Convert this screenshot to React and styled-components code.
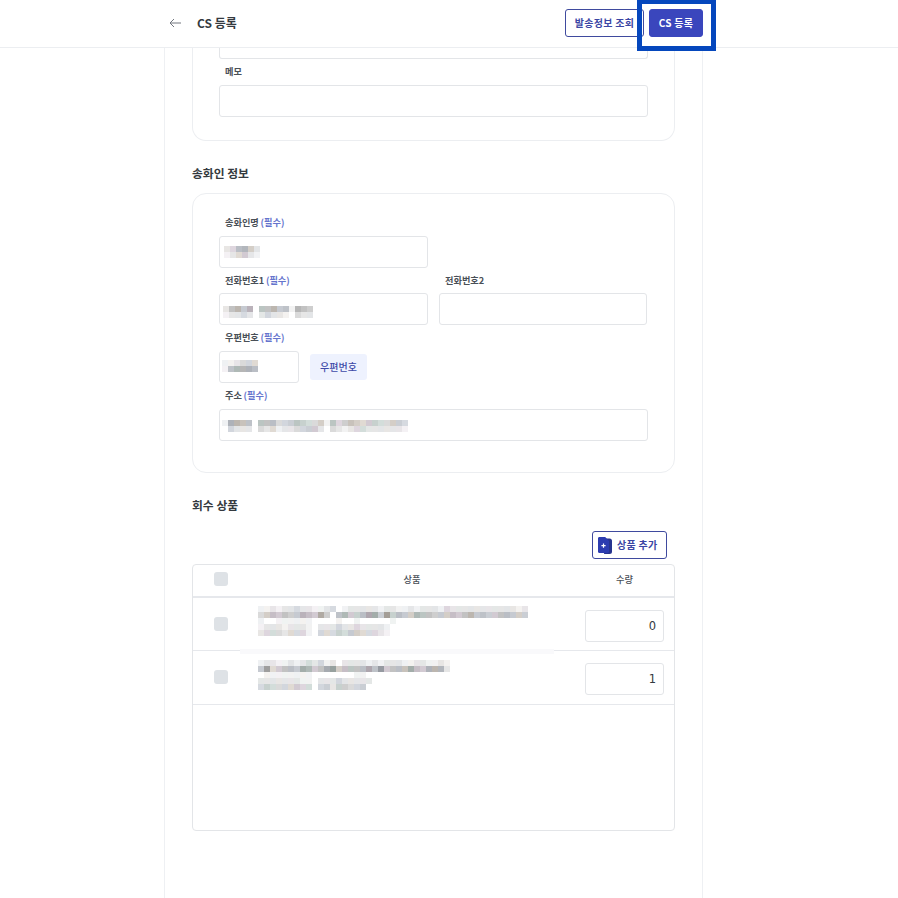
import React from "react";
import styled, { createGlobalStyle } from "styled-components";

const Global = createGlobalStyle`
  html, body { margin: 0; padding: 0; background: #fff; }
  body {
    height: 898px;
    overflow: hidden;
    font-family: "Noto Sans CJK KR", "Noto Sans", sans-serif;
    color: #343a40;
  }
  * { box-sizing: border-box; }
`;

const Page = styled.div`
  position: relative;
  width: 898px;
  height: 898px;
  overflow: hidden;
  display: flex;
  flex-direction: column;
`;

const Header = styled.header`
  flex: none;
  height: 48px;
  border-bottom: 1px solid #eceef1;
  padding: 9px 195px 0 169px;
  display: flex;
  align-items: flex-start;
`;

const BackButton = styled.span`
  display: flex;
  width: 12px;
  height: 28px;
  align-items: center;
  margin-right: 16px;
`;

const PageTitle = styled.h1`
  margin: 0;
  flex: 1;
  font-size: 12px;
  line-height: 27px;
  font-weight: 700;
  color: #343a40;
`;

const HeaderButton = styled.button`
  height: 28px;
  padding: 0;
  margin-left: ${(p) => p.$gap || 0}px;
  width: ${(p) => p.$width}px;
  border-radius: 3px;
  font: 700 10px/26px "Noto Sans CJK KR", sans-serif;
  letter-spacing: 0.3px;
  border: 1px solid ${(p) => (p.$solid ? "#3a46bd" : "#3f4a9e")};
  background: ${(p) => (p.$solid ? "#3a46bd" : "#fff")};
  color: ${(p) => (p.$solid ? "#fff" : "#3b46a5")};
`;

const Highlight = styled.div`
  position: absolute;
  left: 637px;
  top: -1px;
  width: 79px;
  height: 52px;
  border: 5px solid #0547bd;
  pointer-events: none;
`;

const Column = styled.main`
  flex: 1;
  width: 539px;
  margin-left: 164px;
  padding: 0 27px;
  border-left: 1px solid #eef0f3;
  border-right: 1px solid #eef0f3;
`;

const Card = styled.section`
  border: 1px solid #eceef1;
  border-top: ${(p) => (p.$clipped ? "none" : "1px solid #eceef1")};
  border-radius: ${(p) => (p.$clipped ? "0 0 14px 14px" : "14px")};
  padding: ${(p) => (p.$clipped ? "0 26px 23px" : "16.3px 26px 31.7px")};
`;

const SectionTitle = styled.h2`
  margin: 0;
  padding: 22px 0 10px;
  font-size: 11.8px;
  line-height: 20px;
  font-weight: 700;
  color: #343a40;
`;

const Row = styled.div`
  display: flex;
  gap: 11px;
`;

const Field = styled.div`
  display: flex;
  flex-direction: column;
  width: ${(p) => p.$width || "100%"};
`;

const Label = styled.label`
  height: 25.67px;
  padding: 3px 0 0 6px;
  font-size: 9.2px;
  line-height: 18px;
  font-weight: 700;
  color: #495057;
  white-space: nowrap;
`;

const Required = styled.span`
  color: #6574cd;
  margin-left: -0.4px;
`;

const Input = styled.div`
  height: ${(p) => p.$height || 32}px;
  border: 1px solid #e3e5e8;
  border-top: ${(p) => (p.$clipped ? "none" : "1px solid #e3e5e8")};
  border-radius: ${(p) => (p.$clipped ? "0 0 3px 3px" : "3px")};
  padding-left: 3px;
  display: flex;
  align-items: center;
  background: #fff;
`;

const ZipRow = styled.div`
  display: flex;
  align-items: center;
  gap: 11px;
`;

const ZipButton = styled.button`
  width: 57px;
  height: 26px;
  padding: 0;
  border: none;
  border-radius: 3px;
  background: #eef2fe;
  color: #3f4aa8;
  font: 500 10px/26px "Noto Sans CJK KR", sans-serif;
`;

const AddBar = styled.div`
  display: flex;
  justify-content: flex-end;
  padding: 6px 8px 5px 0;
`;

const AddButton = styled.button`
  width: 75px;
  height: 28px;
  padding: 0 0 0 5px;
  border: 1px solid #3f4a9e;
  border-radius: 3px;
  background: #fff;
  color: #3b46a5;
  display: flex;
  align-items: center;
  gap: 5px;
  font: 700 10px/26px "Noto Sans CJK KR", sans-serif;
  letter-spacing: 0.3px;
  white-space: nowrap;
`;

const Table = styled.div`
  height: 267px;
  border: 1px solid #e3e5e8;
  border-radius: 4px;
  overflow: hidden;
`;

const TableRow = styled.div`
  position: relative;
  display: grid;
  grid-template-columns: 65px 308px 1fr;
  align-items: center;
  height: ${(p) => p.$height}px;
  padding-bottom: ${(p) => p.$lift || 0}px;
  border-bottom: ${(p) => p.$rule || 1}px solid #e6e8ec;
`;

const Smudge = styled.div`
  position: absolute;
  left: 47px;
  right: 120px;
  bottom: -4px;
  height: 5px;
  background: #f9f9fb;
`;

const Check = styled.span`
  display: block;
  width: 14px;
  height: 14px;
  margin: -1px 0 0 21px;
  border-radius: 3px;
  background: #dee2e6;
`;

const HeadCell = styled.div`
  justify-self: ${(p) => (p.$qty ? "end" : "center")};
  width: ${(p) => (p.$qty ? "79px" : "auto")};
  margin-right: ${(p) => (p.$qty ? "10px" : 0)};
  text-align: center;
  font-size: 9.2px;
  line-height: 14px;
  font-weight: 500;
  color: #495057;
`;

const Qty = styled.div`
  justify-self: end;
  width: 79px;
  height: 32px;
  margin: 3px 10px 0 0;
  padding-right: 7px;
  border: 1px solid #e3e5e8;
  border-radius: 3px;
  text-align: right;
  font: 400 11.5px/30px "DejaVu Sans", sans-serif;
  color: #343a40;
`;

const MosaicSvg = styled.svg`
  display: block;
  flex: none;
  margin-left: ${(p) => p.$shift || 0}px;
  margin-top: ${(p) => p.$down || 0}px;
`;

const ProductCell = styled.div`
  margin-top: -6px;
`;

const IconSvg = styled.svg`
  flex: none;
`;

const tints = [
  [0, 0, 0],
  [-6, -3, 2],
  [4, 0, -5],
  [-3, 0, 4],
  [3, -3, 3],
  [-5, 2, 0],
];

function Mosaic({ rows, shift, down }) {
  const cols = Math.max(...rows.map((r) => r.length));
  return (
    <MosaicSvg
      $shift={shift}
      $down={down}
      width={cols * 6}
      height={rows.length * 6}
      shapeRendering="crispEdges"
      aria-hidden="true"
    >
      {rows.flatMap((row, y) =>
        [...row].map((c, x) => {
          const d = parseInt(c, 16);
          if (!d) return null;
          const base = 254 - d * 12;
          const t = tints[(x * 7 + y * 3 + d) % tints.length];
          const amp = d > 2 ? 1.4 : 0.5;
          const col = t.map((v) => Math.round(base + v * amp)).join(",");
          return <rect key={`${x}-${y}`} x={x * 6} y={y * 6} width="6" height="6" fill={`rgb(${col})`} />;
        })
      )}
    </MosaicSvg>
  );
}

const Product = ({ rows }) => (
  <ProductCell>
    <Mosaic rows={rows} />
  </ProductCell>
);

const ArrowLeft = () => (
  <svg width="12" height="10" viewBox="0 0 12 10" fill="none" stroke="#73777f" strokeWidth="1">
    <path d="M12 5H1M5 1 1 5l4 4" />
  </svg>
);

const DocPlus = () => (
  <IconSvg width="14" height="17" viewBox="0 0 14 17">
    <path d="M8 1.5h3.5A2.5 2.5 0 0 1 14 4v10.5a2.5 2.5 0 0 1-2.5 2.5H6z" fill="#27348f" />
    <path d="M2 0h5.2L11 4v10.5a1.5 1.5 0 0 1-1.5 1.5H2a1.5 1.5 0 0 1-2-1.5v-13A1.5 1.5 0 0 1 2 0z" fill="#2c3cb0" />
    <path d="M5.5 6.6v4.2M3.4 8.7h4.2" stroke="#fff" strokeWidth="1.2" />
  </IconSvg>
);

const nameBlur = ["235642", "123421"];
const phoneBlur = ["256460556451654", "122320232210322"];
const zipBlur = ["112333", "156665"];
const addrBlur = [
  "1665505553345433415345434433443",
  "0322203231223344203212332222221",
];
const product1 = [
  "112122322112301222221221121222132222222222212",
  "345454465474056445774845446554445456454455444",
  "100111111000010010000010000000000000000000000",
  "122212221022232232222100000000000000000000000",
  "233323331033343443332100000000000000000000000",
];
const product2 = [
  "12211212323120222212122211221121",
  "48345547645784555575845557546662",
  "01111111100000001100000000000000",
  "2222222110222322222000000000000",
  "3433334330342443340000000000000",
];

export default function App() {
  return (
    <Page>
      <Global />
      <Header>
        <BackButton>
          <ArrowLeft />
        </BackButton>
        <PageTitle>CS 등록</PageTitle>
        <HeaderButton $width={79}>발송정보 조회</HeaderButton>
        <HeaderButton $solid $width={54} $gap={5}>
          CS 등록
        </HeaderButton>
      </Header>
      <Highlight />
      <Column>
        <Card $clipped>
          <Input $clipped $height={11} />
          <Field>
            <Label>메모</Label>
            <Input />
          </Field>
        </Card>

        <SectionTitle>송화인 정보</SectionTitle>
        <Card>
          <Field $width="209px">
            <Label>
              송화인명 <Required>(필수)</Required>
            </Label>
            <Input>
              <Mosaic rows={nameBlur} shift={1} />
            </Input>
          </Field>
          <Row>
            <Field $width="209px">
              <Label>
                전화번호1 <Required>(필수)</Required>
              </Label>
              <Input>
                <Mosaic rows={phoneBlur} down={5} />
              </Input>
            </Field>
            <Field $width="208px">
              <Label>전화번호2</Label>
              <Input />
            </Field>
          </Row>
          <Field>
            <Label>
              우편번호 <Required>(필수)</Required>
            </Label>
            <ZipRow>
              <Field $width="80px">
                <Input>
                  <Mosaic rows={zipBlur} shift={-1} down={-2} />
                </Input>
              </Field>
              <ZipButton>우편번호</ZipButton>
            </ZipRow>
          </Field>
          <Field>
            <Label>
              주소 <Required>(필수)</Required>
            </Label>
            <Input>
              <Mosaic rows={addrBlur} shift={-1} down={2} />
            </Input>
          </Field>
        </Card>

        <SectionTitle>회수 상품</SectionTitle>
        <AddBar>
          <AddButton>
            <DocPlus />
            상품 추가
          </AddButton>
        </AddBar>
        <Table>
          <TableRow $height={33} $rule={2} $lift={3}>
            <Check />
            <HeadCell>상품</HeadCell>
            <HeadCell $qty>수량</HeadCell>
          </TableRow>
          <TableRow $height={53}>
            <Check />
            <Product rows={product1} />
            <Qty>0</Qty>
            <Smudge />
          </TableRow>
          <TableRow $height={54}>
            <Check />
            <Product rows={product2} />
            <Qty>1</Qty>
          </TableRow>
        </Table>
      </Column>
    </Page>
  );
}
